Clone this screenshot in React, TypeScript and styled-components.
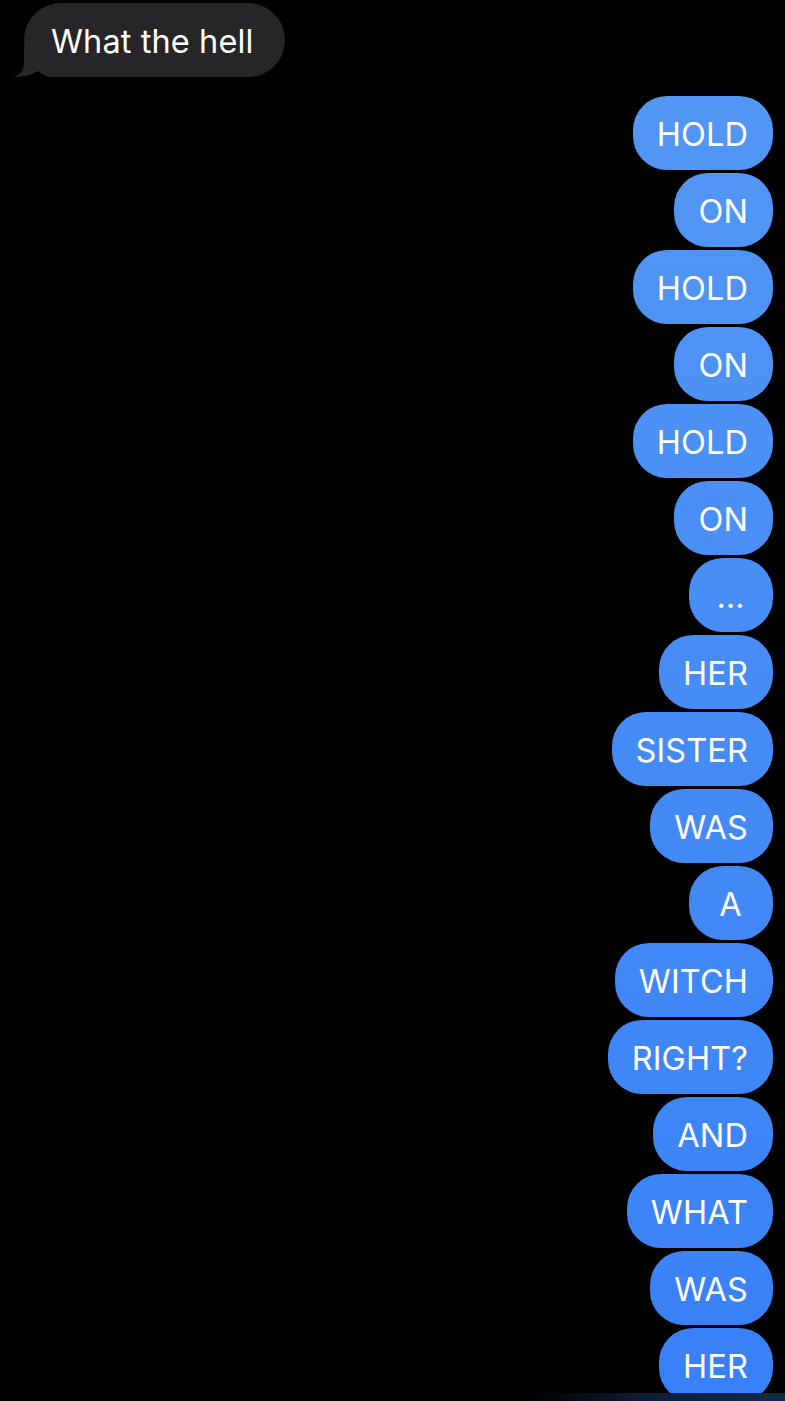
import React from "react";
import styled, { createGlobalStyle } from "styled-components";

const Global = createGlobalStyle`
  html, body { margin: 0; padding: 0; background: #000; }
  body { font-family: Inter, "Noto Sans", "Liberation Sans", sans-serif; overflow: hidden; }
`;

const Screen = styled.div`
  position: relative;
  width: 785px;
  height: 1401px;
  background: #000;
  overflow: hidden;
`;

const Thread = styled.div`
  display: flex;
  flex-direction: column;
  padding: 3px 12px 0 24px;
`;

const IncomingRow = styled.div`
  display: flex;
  justify-content: flex-start;
  margin-bottom: 19px;
`;

const IncomingBubble = styled.div`
  position: relative;
  height: 74px;
  box-sizing: border-box;
  padding: 2px 32px 0 27px;
  display: flex;
  align-items: center;
  border-radius: 37px;
  background: #262628;
  color: #fff;
  font-size: 32.5px;
  letter-spacing: 0.1px;
`;

const Tail = styled.svg`
  position: absolute;
  left: -14px;
  bottom: 0;
  width: 50px;
  height: 30px;
  overflow: visible;
`;

const Label = styled.span`
  position: relative;
`;

const OutgoingList = styled.div`
  display: flex;
  flex-direction: column;
  align-items: flex-end;
  gap: 3px;
`;

const OutgoingBubble = styled.div`
  height: 74px;
  box-sizing: border-box;
  padding: 2px 25px 0 24px;
  min-width: 84px;
  display: flex;
  align-items: center;
  justify-content: center;
  border-radius: 34px;
  background: linear-gradient(180deg, #5598f4 0px, #3880f7 1401px);
  background-attachment: fixed;
  color: #fff;
  font-size: 32.5px;
  letter-spacing: 0.1px;
`;

const BottomBar = styled.div`
  position: absolute;
  left: 0;
  right: 0;
  bottom: 0;
  height: 8px;
  background: linear-gradient(90deg, #000 0px, #000 530px, #0c1d36 640px, #122a4b 785px);
`;

const words = [
  "HOLD", "ON", "HOLD", "ON", "HOLD", "ON", "...", "HER", "SISTER",
  "WAS", "A", "WITCH", "RIGHT?", "AND", "WHAT", "WAS", "HER",
];

export default function App() {
  return (
    <Screen>
      <Global />
      <Thread>
        <IncomingRow>
          <IncomingBubble>
            <Tail viewBox="0 0 50 30">
              <path
                d="M14 0 L14 15 C14 23 10 28 4 30 C13 30 22 28 28 24 C32 27 36 30 42 30 L50 30 L50 0 Z"
                fill="#262628"
              />
            </Tail>
            <Label>What the hell</Label>
          </IncomingBubble>
        </IncomingRow>
        <OutgoingList>
          {words.map((w, i) => (
            <OutgoingBubble key={i}>{w === "..." ? "…" : w}</OutgoingBubble>
          ))}
        </OutgoingList>
      </Thread>
      <BottomBar />
    </Screen>
  );
}
